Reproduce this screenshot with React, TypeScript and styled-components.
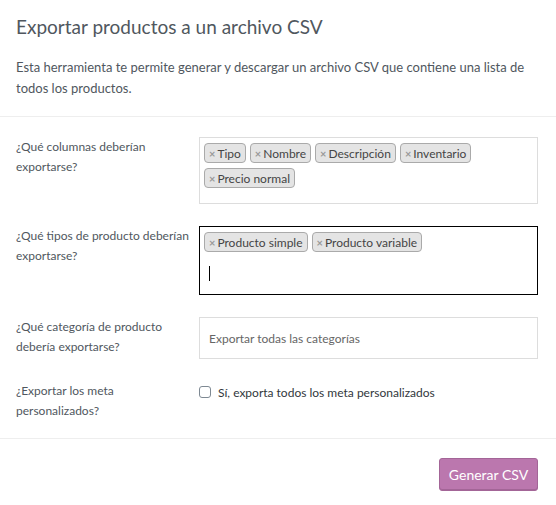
import React from "react";
import styled, { createGlobalStyle } from "styled-components";

const GlobalStyle = createGlobalStyle`
  html, body {
    margin: 0;
    padding: 0;
    background: #fff;
  }
  body {
    font-family: Lato, "Open Sans", sans-serif;
    color: #50575e;
  }
`;

const Panel = styled.div`
  width: 556px;
  background: #fff;
`;

const Header = styled.header`
  padding: 14px 16px 17px 16px;
  border-bottom: 1px solid #eee;
`;

const Title = styled.h2`
  margin: 0 0 17px 0;
  font-size: 19px;
  font-weight: 400;
  line-height: 26px;
  color: #50575e;
`;

const Intro = styled.p`
  margin: 0;
  font-size: 13px;
  line-height: 21px;
  color: #50575e;
`;

const Form = styled.section`
  display: grid;
  grid-template-columns: 177px 339px;
  column-gap: 6px;
  row-gap: 22px;
  padding: 20px 16px 17px 16px;
  border-bottom: 1px solid #eee;
`;

const Label = styled.label`
  font-size: 12px;
  line-height: 20px;
  color: #50575e;
`;

const TagBox = styled.div<{ $focused?: boolean }>`
  box-sizing: border-box;
  min-height: 67px;
  display: flex;
  flex-wrap: wrap;
  align-content: flex-start;
  gap: 5px 4px;
  padding: 5px 4px;
  border: 1px solid ${(p) => (p.$focused ? "#000" : "#ddd")};
  background: #fff;
`;

const Tag = styled.span`
  box-sizing: border-box;
  display: inline-flex;
  align-items: center;
  height: 20px;
  padding: 0 4px;
  border: 1px solid #aaa;
  border-radius: 4px;
  background: #e4e4e4;
  font-size: 12px;
  color: #444;
`;

const Remove = styled.span`
  margin-right: 2px;
  font-size: 11px;
  font-weight: 700;
  color: #999;
`;

const SearchLine = styled.div`
  flex-basis: 100%;
  height: 32px;
  display: flex;
  align-items: center;
  padding-left: 5px;
`;

const Caret = styled.span`
  width: 1px;
  height: 15px;
  background: #000;
`;

const SelectBox = styled.div`
  box-sizing: border-box;
  height: 42px;
  display: flex;
  align-items: center;
  padding: 0 9px;
  border: 1px solid #ddd;
  font-size: 12px;
  color: #666;
`;

const CheckRow = styled.label`
  display: flex;
  align-items: center;
  gap: 7px;
  height: 20px;
  margin-top: 1px;
  font-size: 12px;
  color: #32373c;
`;

const Box = styled.span`
  box-sizing: border-box;
  width: 12px;
  height: 12px;
  border: 1px solid #7e8993;
  border-radius: 3px;
  background: #fff;
`;

const Footer = styled.footer`
  display: flex;
  justify-content: flex-end;
  padding: 19px 18px 15px 16px;
`;

const Button = styled.button`
  box-sizing: border-box;
  width: 99px;
  height: 33px;
  border: 1px solid #a36597;
  border-radius: 3px;
  background: #bb77ae;
  color: #fff;
  font-family: inherit;
  font-size: 14px;
  box-shadow: inset 0 -1px 0 #a36597;
  cursor: pointer;
`;

const columns = ["Tipo", "Nombre", "Descripción", "Inventario", "Precio normal"];
const types = ["Producto simple", "Producto variable"];

const App: React.FC = () => (
  <Panel>
    <GlobalStyle />
    <Header>
      <Title>Exportar productos a un archivo CSV</Title>
      <Intro>
        Esta herramienta te permite generar y descargar un archivo CSV que contiene una lista de
        todos los productos.
      </Intro>
    </Header>
    <Form>
      <Label>¿Qué columnas deberían exportarse?</Label>
      <TagBox>
        {columns.map((c) => (
          <Tag key={c}>
            <Remove>×</Remove>
            {c}
          </Tag>
        ))}
      </TagBox>

      <Label>¿Qué tipos de producto deberían exportarse?</Label>
      <TagBox $focused>
        {types.map((t) => (
          <Tag key={t}>
            <Remove>×</Remove>
            {t}
          </Tag>
        ))}
        <SearchLine>
          <Caret />
        </SearchLine>
      </TagBox>

      <Label>¿Qué categoría de producto debería exportarse?</Label>
      <SelectBox>Exportar todas las categorías</SelectBox>

      <Label>¿Exportar los meta personalizados?</Label>
      <CheckRow>
        <Box />
        Sí, exporta todos los meta personalizados
      </CheckRow>
    </Form>
    <Footer>
      <Button>Generar CSV</Button>
    </Footer>
  </Panel>
);

export default App;
